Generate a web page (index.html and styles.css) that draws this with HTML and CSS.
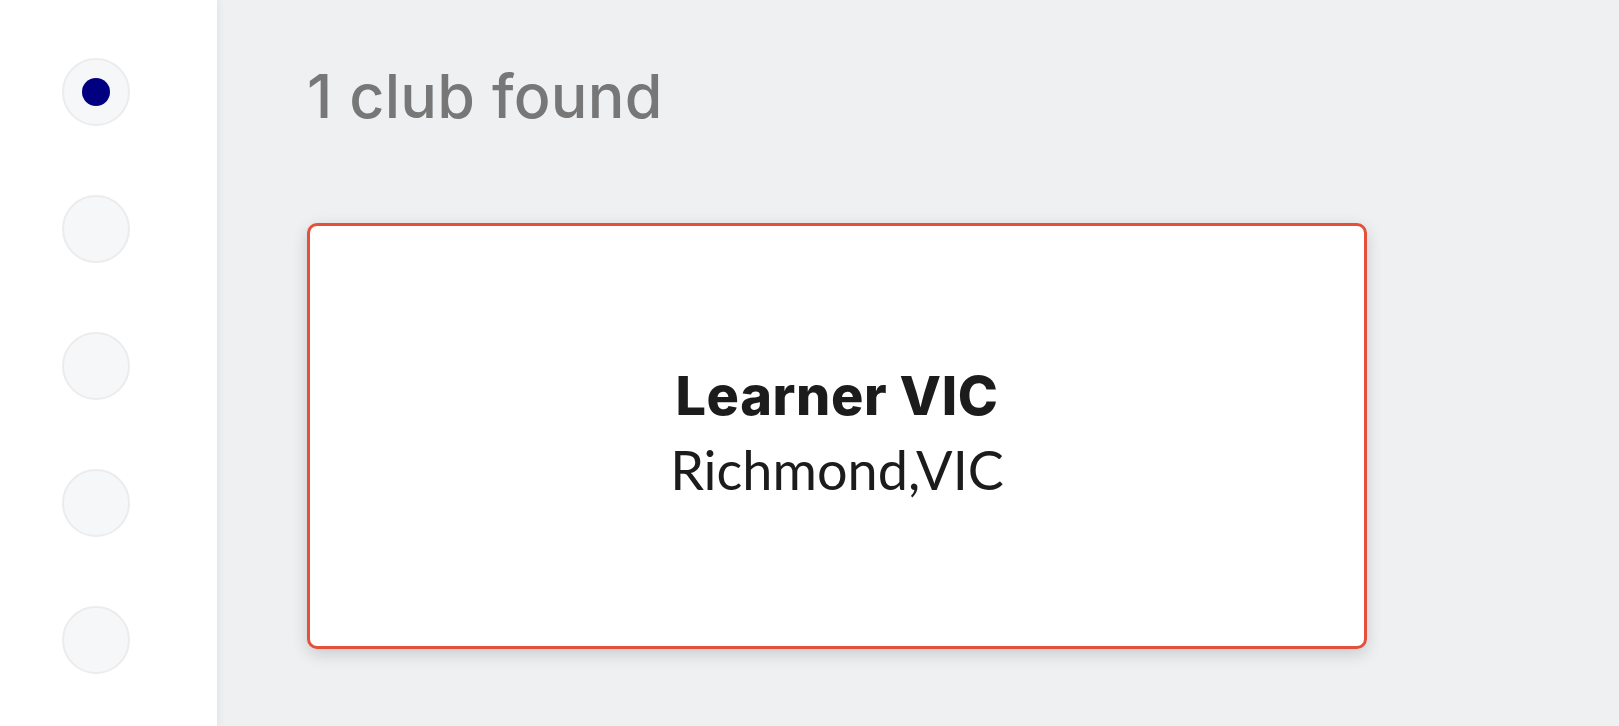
FILE: index.html
```html
<!DOCTYPE html>
<html lang="en">
<head>
<meta charset="utf-8">
<title>Clubs</title>
<link rel="stylesheet" href="styles.css">
</head>
<body>
<div class="app">
  <aside class="sidebar">
    <div class="step active"><span class="dot"></span></div>
    <div class="step"></div>
    <div class="step"></div>
    <div class="step"></div>
    <div class="step"></div>
  </aside>
  <main class="main">
    <h1 class="count">1 club found</h1>
    <div class="card">
      <div class="club-name">Learner VIC</div>
      <div class="club-loc">Richmond,VIC</div>
    </div>
  </main>
</div>
</body>
</html>
```

FILE: styles.css
```css
html, body {
  margin: 0;
  padding: 0;
  height: 100%;
}
body {
  font-family: "Inter", "Liberation Sans", sans-serif;
  background: #eff0f2;
}
.app {
  display: flex;
  height: 100vh;
}
.sidebar {
  width: 217px;
  flex: 0 0 217px;
  background: #ffffff;
  display: flex;
  flex-direction: column;
  gap: 69px;
  padding: 58px 0 0 62px;
  box-sizing: border-box;
  box-shadow: 2px 0 8px rgba(0, 0, 0, 0.06);
  position: relative;
  z-index: 1;
}
.step {
  width: 68px;
  height: 68px;
  box-sizing: border-box;
  border-radius: 50%;
  background: #f6f7f9;
  border: 2px solid #ececec;
  display: flex;
  align-items: center;
  justify-content: center;
}
.dot {
  width: 28px;
  height: 28px;
  border-radius: 50%;
  background: #000080;
}
.main {
  flex: 1;
  background: #eff0f2;
  padding: 0 0 0 90px;
}
.count {
  margin: 56px 0 0 0;
  font-size: 61px;
  line-height: 80px;
  font-weight: 500;
  color: #777777;
  letter-spacing: 0.3px;
}
.card {
  margin-top: 87px;
  width: 1060px;
  height: 426px;
  box-sizing: border-box;
  border: 3px solid #e5503c;
  border-radius: 10px;
  background: #ffffff;
  box-shadow: 0 5px 16px rgba(0, 0, 0, 0.16);
  display: flex;
  flex-direction: column;
  align-items: center;
  justify-content: center;
  padding-bottom: 5px;
}
.club-name {
  font-family: "Inter", "Liberation Sans", sans-serif;
  font-weight: 800;
  font-size: 54px;
  line-height: 70px;
  color: #1c1c1c;
  letter-spacing: 0.6px;
}
.club-loc {
  margin-top: 3px;
  font-family: "Lato", "Liberation Sans", sans-serif;
  font-size: 54px;
  line-height: 72px;
  color: #1c1c1c;
}
```
